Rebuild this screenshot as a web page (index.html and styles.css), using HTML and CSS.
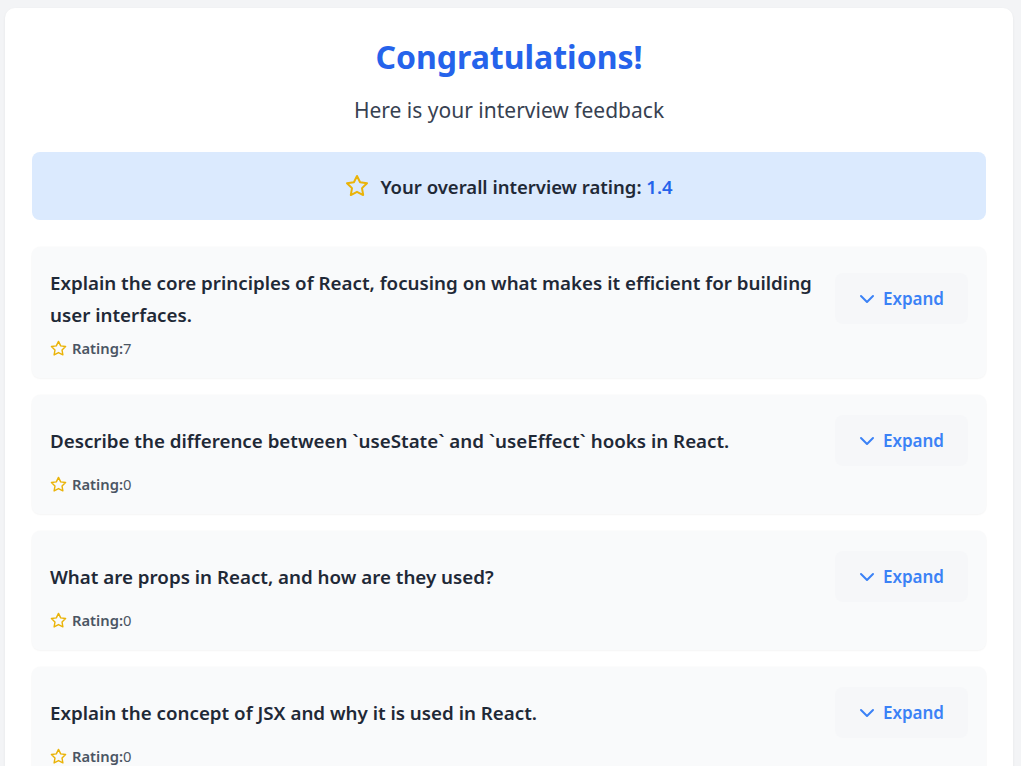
FILE: index.html
```html
<!DOCTYPE html>
<html lang="en">
<head>
<meta charset="utf-8">
<title>Interview Feedback</title>
<link rel="stylesheet" href="styles.css">
</head>
<body>
<main class="page">
  <section class="card">
    <h1 class="title">Congratulations!</h1>
    <p class="subtitle">Here is your interview feedback</p>
    <div class="overall">
      <svg class="overall-star" viewBox="0 0 24 24" width="24" height="24" fill="none" stroke="currentColor" stroke-width="2" stroke-linecap="round" stroke-linejoin="round"><polygon points="12 2 15.09 8.26 22 9.27 17 14.14 18.18 21.02 12 17.77 5.82 21.02 7 14.14 2 9.27 8.91 8.26 12 2"/></svg>
      <span class="overall-text">Your overall interview rating: <span class="overall-value">1.4</span></span>
    </div>

    <ul class="questions">
      <li class="question">
        <div class="question-row">
          <h2 class="question-text">Explain the core principles of React, focusing on what makes it efficient for building user interfaces.</h2>
          <button class="expand"><svg viewBox="0 0 24 24" width="24" height="24" fill="none" stroke="currentColor" stroke-width="2" stroke-linecap="round" stroke-linejoin="round"><polyline points="6 9 12 15 18 9"/></svg><span>Expand</span></button>
        </div>
        <div class="rating"><svg class="rating-star" viewBox="0 0 24 24" width="17" height="17" fill="none" stroke="currentColor" stroke-width="2" stroke-linecap="round" stroke-linejoin="round"><polygon points="12 2 15.09 8.26 22 9.27 17 14.14 18.18 21.02 12 17.77 5.82 21.02 7 14.14 2 9.27 8.91 8.26 12 2"/></svg><span class="rating-label">Rating:</span><span class="rating-value">7</span></div>
      </li>
      <li class="question">
        <div class="question-row">
          <h2 class="question-text">Describe the difference between `useState` and `useEffect` hooks in React.</h2>
          <button class="expand"><svg viewBox="0 0 24 24" width="24" height="24" fill="none" stroke="currentColor" stroke-width="2" stroke-linecap="round" stroke-linejoin="round"><polyline points="6 9 12 15 18 9"/></svg><span>Expand</span></button>
        </div>
        <div class="rating"><svg class="rating-star" viewBox="0 0 24 24" width="17" height="17" fill="none" stroke="currentColor" stroke-width="2" stroke-linecap="round" stroke-linejoin="round"><polygon points="12 2 15.09 8.26 22 9.27 17 14.14 18.18 21.02 12 17.77 5.82 21.02 7 14.14 2 9.27 8.91 8.26 12 2"/></svg><span class="rating-label">Rating:</span><span class="rating-value">0</span></div>
      </li>
      <li class="question">
        <div class="question-row">
          <h2 class="question-text">What are props in React, and how are they used?</h2>
          <button class="expand"><svg viewBox="0 0 24 24" width="24" height="24" fill="none" stroke="currentColor" stroke-width="2" stroke-linecap="round" stroke-linejoin="round"><polyline points="6 9 12 15 18 9"/></svg><span>Expand</span></button>
        </div>
        <div class="rating"><svg class="rating-star" viewBox="0 0 24 24" width="17" height="17" fill="none" stroke="currentColor" stroke-width="2" stroke-linecap="round" stroke-linejoin="round"><polygon points="12 2 15.09 8.26 22 9.27 17 14.14 18.18 21.02 12 17.77 5.82 21.02 7 14.14 2 9.27 8.91 8.26 12 2"/></svg><span class="rating-label">Rating:</span><span class="rating-value">0</span></div>
      </li>
      <li class="question">
        <div class="question-row">
          <h2 class="question-text">Explain the concept of JSX and why it is used in React.</h2>
          <button class="expand"><svg viewBox="0 0 24 24" width="24" height="24" fill="none" stroke="currentColor" stroke-width="2" stroke-linecap="round" stroke-linejoin="round"><polyline points="6 9 12 15 18 9"/></svg><span>Expand</span></button>
        </div>
        <div class="rating"><svg class="rating-star" viewBox="0 0 24 24" width="17" height="17" fill="none" stroke="currentColor" stroke-width="2" stroke-linecap="round" stroke-linejoin="round"><polygon points="12 2 15.09 8.26 22 9.27 17 14.14 18.18 21.02 12 17.77 5.82 21.02 7 14.14 2 9.27 8.91 8.26 12 2"/></svg><span class="rating-label">Rating:</span><span class="rating-value">0</span></div>
      </li>
    </ul>
  </section>
</main>
</body>
</html>
```

FILE: styles.css
```css
* { box-sizing: border-box; }

html, body {
  margin: 0;
  padding: 0;
}

body {
  background: #f3f4f6;
  font-family: "Noto Sans", "Open Sans", sans-serif;
  color: #1f2937;
}

.page {
  padding: 8px 8px 0 5px;
}

.card {
  background: #ffffff;
  border-radius: 10px;
  padding: 29px 27px 27px;
  box-shadow: 0 1px 3px rgba(0, 0, 0, 0.06);
}

.title {
  margin: 0;
  text-align: center;
  font-size: 32px;
  line-height: 40px;
  font-weight: 700;
  color: #2563eb;
}

.subtitle {
  margin: 19px 0 0;
  text-align: center;
  font-size: 21px;
  line-height: 28px;
  color: #374151;
}

.overall {
  margin-top: 28px;
  height: 68px;
  background: #dbeafe;
  border-radius: 8px;
  display: flex;
  align-items: center;
  justify-content: center;
  gap: 11px;
}

.overall-star {
  color: #eab308;
  flex: none;
}

.overall-text {
  font-size: 18.5px;
  font-weight: 600;
  color: #1f2937;
}

.overall-value {
  color: #2563eb;
}

.questions {
  list-style: none;
  margin: 27px 0 0;
  padding: 0;
  display: flex;
  flex-direction: column;
  gap: 17px;
}

.question {
  background: #f9fafb;
  border-radius: 8px;
  padding: 20px 18px;
  box-shadow: 0 0 0 1px rgba(0, 0, 0, 0.012), 0 1px 2px rgba(0, 0, 0, 0.03);
}

.question-row {
  display: flex;
  align-items: center;
  justify-content: space-between;
  gap: 12px;
}

.question-text {
  margin: 0;
  font-size: 18.75px;
  line-height: 31.5px;
  font-weight: 600;
  color: #1f2937;
}

.expand {
  flex: none;
  display: flex;
  align-items: center;
  gap: 4px;
  height: 51px;
  padding: 0 24px 0 20px;
  border: none;
  border-radius: 8px;
  background: #f6f7f9;
  color: #3b82f6;
  font-family: inherit;
  font-size: 17px;
  font-weight: 600;
  cursor: pointer;
}

.rating {
  margin-top: 8px;
  display: flex;
  align-items: center;
  height: 20px;
  font-size: 14.75px;
  color: #4b5563;
}

.rating-star {
  color: #eab308;
  margin-right: 5px;
  flex: none;
}

.rating-label {
  font-weight: 600;
}
```
